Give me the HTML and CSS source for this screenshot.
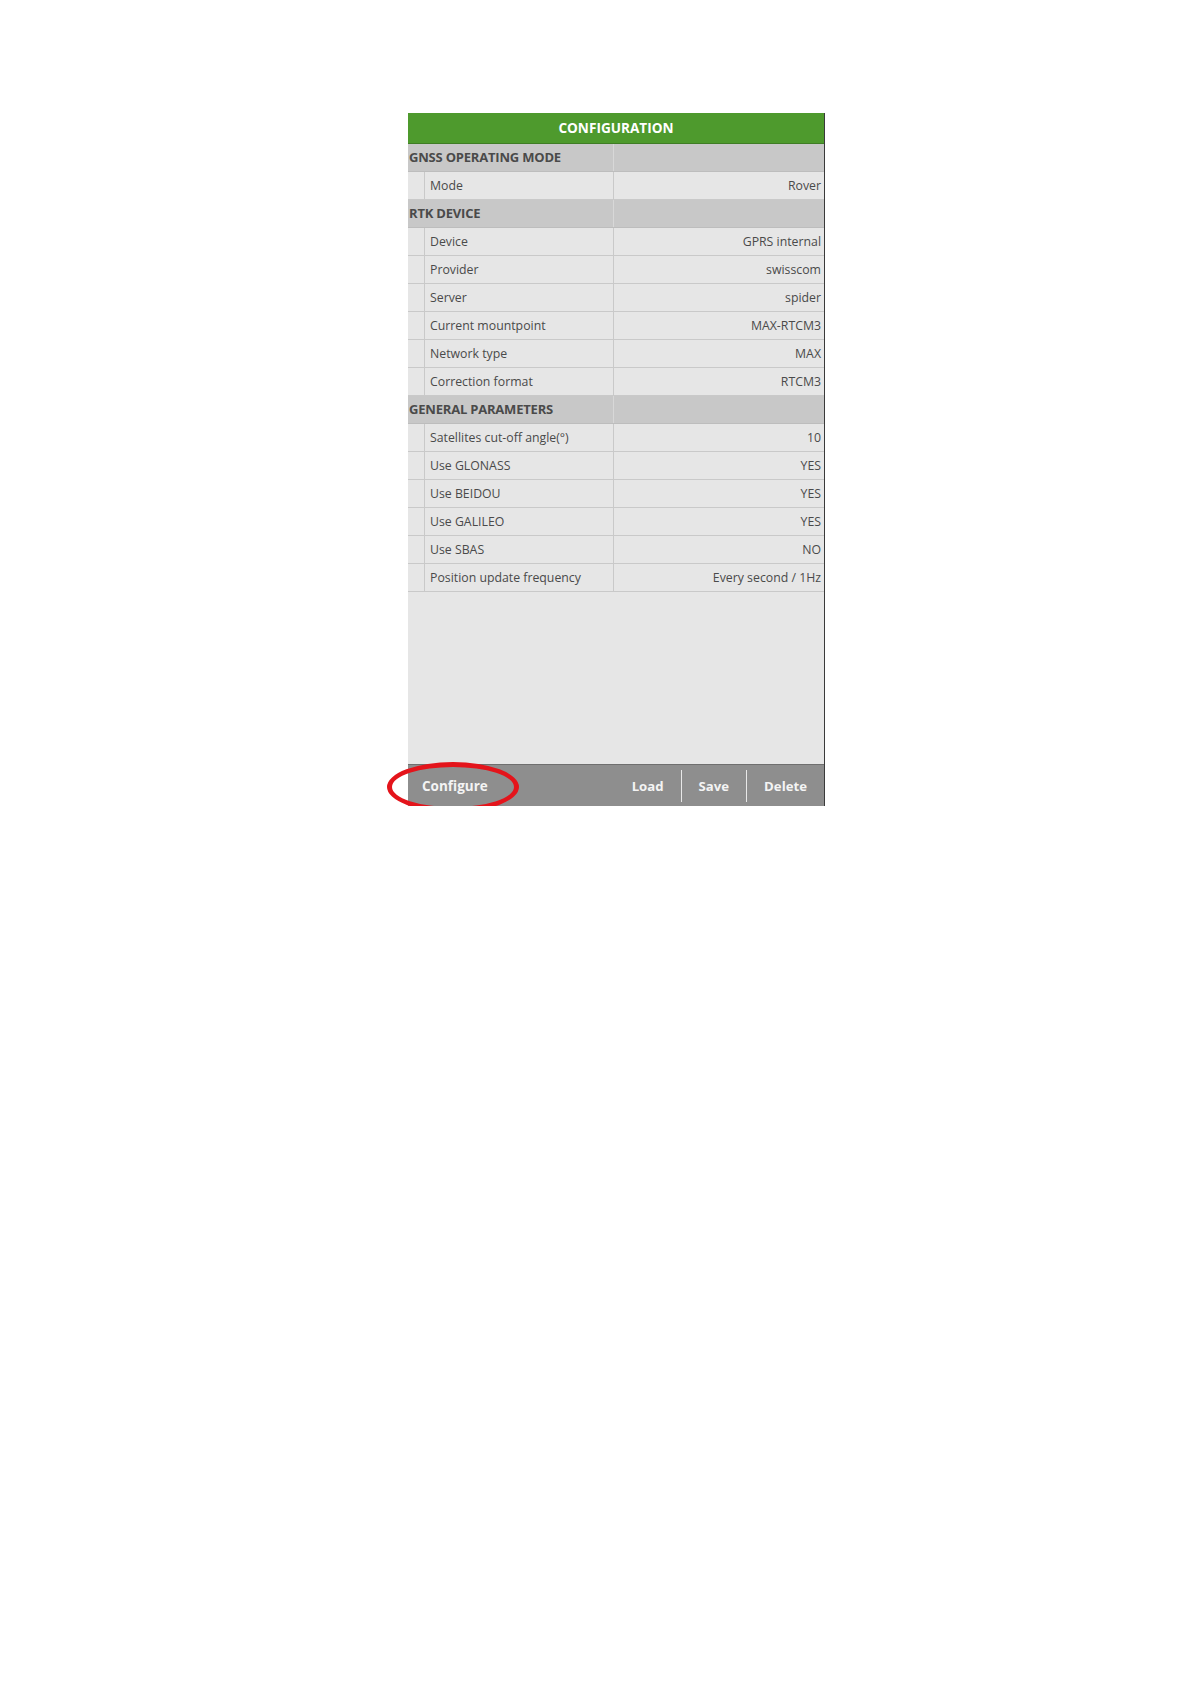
FILE: index.html
```html
<!DOCTYPE html>
<html lang="en">
<head>
    <meta charset="UTF-8">
    <title>Configuration</title>
    <link rel="stylesheet" href="styles.css">
</head>
<body>

    <div class="panel">
        <div class="panel-title">CONFIGURATION</div>

        <!-- GNSS operating mode -->
        <div class="section"><span>GNSS OPERATING MODE</span><span></span></div>
        <div class="row"><span class="indent"></span><span class="label">Mode</span><span class="value">Rover</span></div>

        <!-- RTK device -->
        <div class="section"><span>RTK DEVICE</span><span></span></div>
        <div class="row"><span class="indent"></span><span class="label">Device</span><span class="value">GPRS internal</span></div>
        <div class="row"><span class="indent"></span><span class="label">Provider</span><span class="value">swisscom</span></div>
        <div class="row"><span class="indent"></span><span class="label">Server</span><span class="value">spider</span></div>
        <div class="row"><span class="indent"></span><span class="label">Current mountpoint</span><span class="value">MAX-RTCM3</span></div>
        <div class="row"><span class="indent"></span><span class="label">Network type</span><span class="value">MAX</span></div>
        <div class="row"><span class="indent"></span><span class="label">Correction format</span><span class="value">RTCM3</span></div>

        <!-- General parameters -->
        <div class="section"><span>GENERAL PARAMETERS</span><span></span></div>
        <div class="row"><span class="indent"></span><span class="label">Satellites cut-off angle(°)</span><span class="value">10</span></div>
        <div class="row"><span class="indent"></span><span class="label">Use GLONASS</span><span class="value">YES</span></div>
        <div class="row"><span class="indent"></span><span class="label">Use BEIDOU</span><span class="value">YES</span></div>
        <div class="row"><span class="indent"></span><span class="label">Use GALILEO</span><span class="value">YES</span></div>
        <div class="row"><span class="indent"></span><span class="label">Use SBAS</span><span class="value">NO</span></div>
        <div class="row"><span class="indent"></span><span class="label">Position update frequency</span><span class="value">Every second / 1Hz</span></div>

        <div class="filler"></div>

        <!-- Bottom toolbar -->
        <div class="toolbar">
            <span class="tool-left">Configure</span>
            <span class="tool">Load</span>
            <span class="tool sep">Save</span>
            <span class="tool sep">Delete</span>
            <span class="highlight"></span>
        </div>
    </div>

</body>
</html>
```

FILE: styles.css
```css
body {
    margin: 0;
    padding: 113px 0 0 408px;
    background: #fff;
    font-family: 'Open Sans', 'Noto Sans', sans-serif;
}

.panel {
    width: 416px;
    border-right: 1px solid #3a3a3a;
    background-color: #e6e6e6;
    color: #4a4a4a;
    font-size: 12.3px;
}

.panel-title {
    height: 30px;
    line-height: 30px;
    background-color: #4e9a2d;
    border-bottom: 1px solid #3f7d25;
    color: #fff;
    text-align: center;
    font-weight: bold;
    font-size: 13.6px;
}

.section {
    display: grid;
    grid-template-columns: 206px 210px;
    height: 27px;
    line-height: 27px;
    background-color: #c8c8c8;
    border-bottom: 1px solid #bdbdbd;
    font-weight: bold;
    font-size: 13px;
    color: #4a4a4a;
    letter-spacing: -0.2px;
}

.section span:first-child {
    padding-left: 1px;
    border-right: 1px solid #d8d8d8;
}

.row {
    display: grid;
    grid-template-columns: 17px 189px 210px;
    height: 27px;
    line-height: 27px;
    border-bottom: 1px solid #c9c9c9;
}

.indent {
    border-right: 1px solid #c9c9c9;
}

.label {
    padding-left: 5px;
    border-right: 1px solid #c9c9c9;
    white-space: nowrap;
}

.value {
    text-align: right;
    padding-right: 3px;
    white-space: nowrap;
}

.filler {
    height: 172px;
}

.toolbar {
    position: relative;
    display: flex;
    align-items: center;
    height: 41px;
    background-color: #8e8e8e;
    border-top: 1px solid #6f6f6f;
    color: #f4f4f4;
    font-weight: bold;
    font-size: 13.2px;
}

.tool-left {
    padding-left: 14px;
    margin-right: auto;
    font-size: 13.5px;
}

.tool {
    padding: 0 17px;
    line-height: 32px;
}

.tool.sep {
    border-left: 1px solid #e8e8e8;
}

.tool:last-of-type {
    padding-right: 16px;
}

.highlight {
    position: absolute;
    left: -21px;
    top: -3px;
    width: 122px;
    height: 40px;
    border: 5px solid #e4141b;
    border-radius: 50%;
}
```
